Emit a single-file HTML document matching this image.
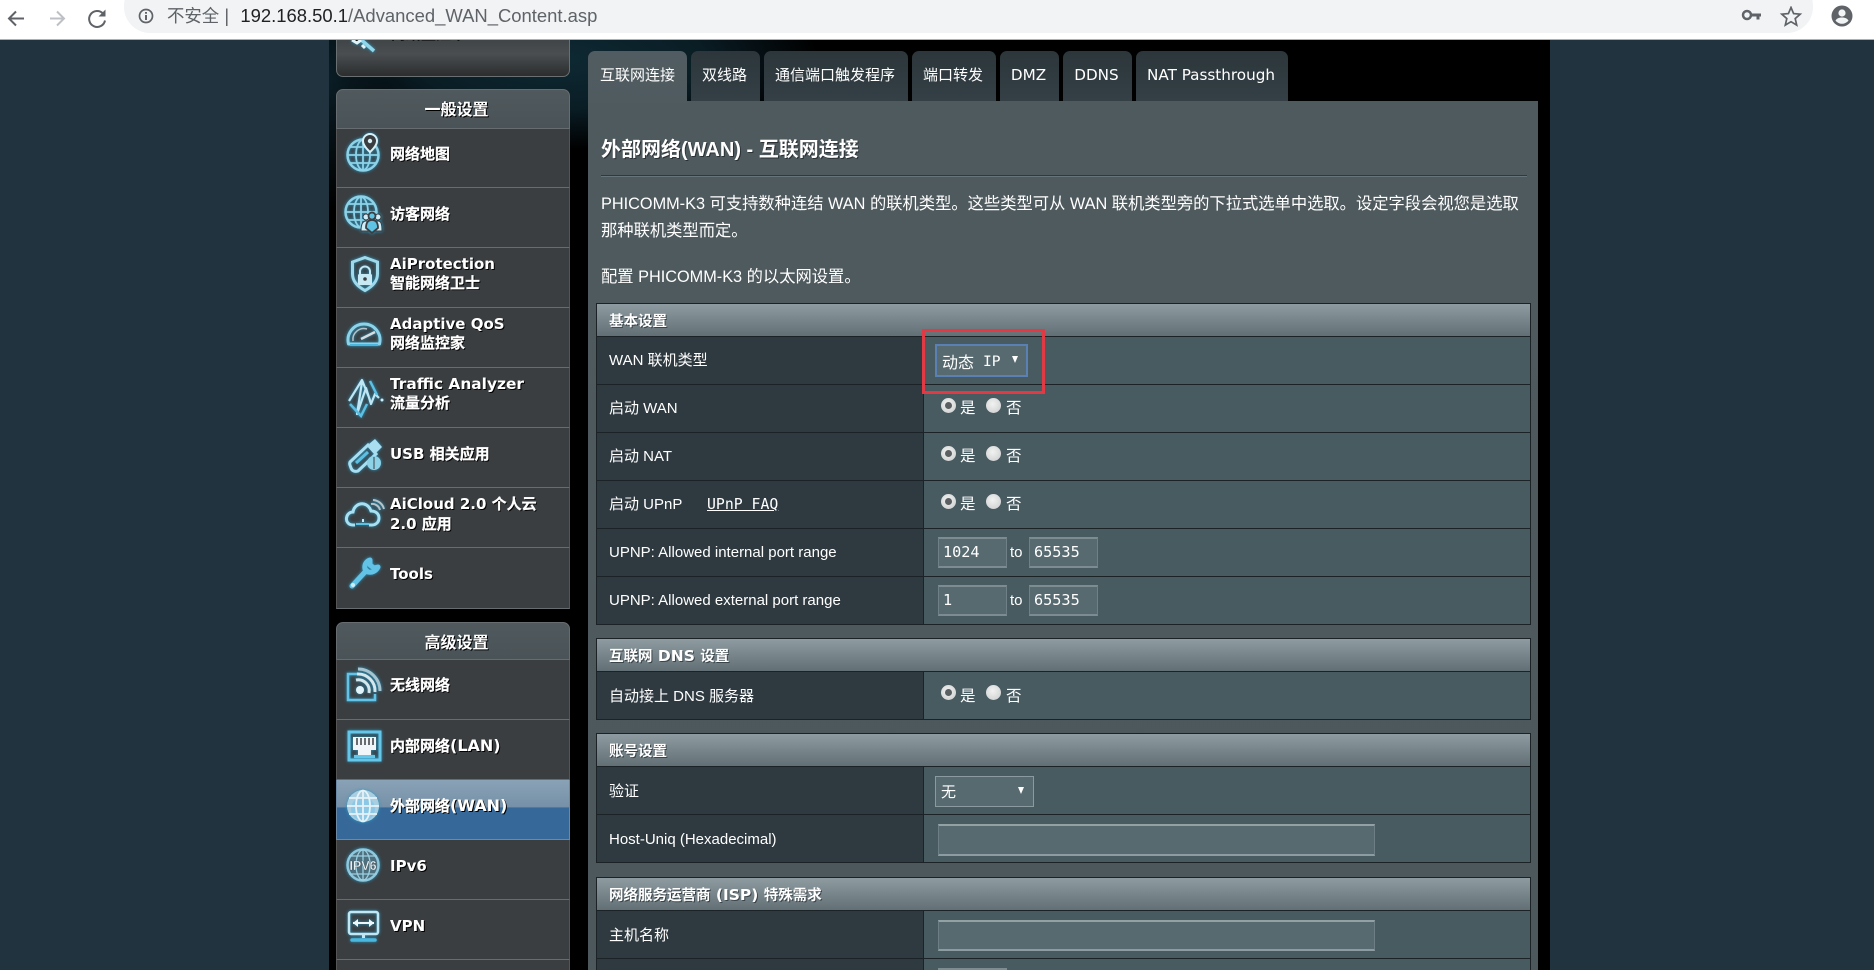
<!DOCTYPE html>
<html lang="zh"><head><meta charset="utf-8"><title>Advanced_WAN_Content</title>
<style>
html,body{margin:0;padding:0;width:1874px;height:970px;overflow:hidden;background:#21333e}
*{box-sizing:border-box}
body{font-family:"Liberation Sans","Noto Sans CJK SC",sans-serif;color:#fff;position:relative}
.a{position:absolute}
#wrap{left:329px;top:39px;width:1221px;height:931px;background:#000;overflow:hidden}
#banner{left:0;top:0;width:1221px;height:183px;background:
 radial-gradient(ellipse 260px 90px at 230px 20px,#0e2933 0%,#0a1d25 55%,rgba(0,0,0,0) 100%),
 radial-gradient(ellipse 60px 130px at 0 40px,#0b1d25 0%,rgba(0,0,0,0) 100%)}
#bar{left:0;top:0;width:1874px;height:40px;background:#fff;border-bottom:1px solid #aeb1b3;z-index:9}
#pill{left:124px;top:-20px;width:1689px;height:53px;background:#f1f3f4;border-radius:26px}
#url{left:167px;top:3px;height:26px;line-height:26px;font-size:18.450px;color:#5f6368;white-space:nowrap}
#url b{font-weight:400;color:#202124}
#url i{font-style:normal;font-size:17.400px}
.it{position:absolute;left:336px;width:234px;height:60px;border-bottom:1px solid #666c6f;border-left:1px solid #555;border-right:1px solid #555;background:#3a3e41;z-index:1}
.t{position:absolute;left:390px;font:bold 15px/20px "DejaVu Sans","Noto Sans CJK SC",sans-serif;color:#fff;text-shadow:1px 1px 0 #000;white-space:nowrap;z-index:3}
.t i{font-style:normal;font-size:15px;font-family:"Noto Sans CJK SC",sans-serif;-webkit-text-stroke:.25px #fff}
.t u{text-decoration:none;font-size:16px}
svg.ic{position:absolute;z-index:3;overflow:visible;filter:drop-shadow(0 0 1.500px #2a9cc8)}
.tab{position:absolute;top:51px;height:50px;background:linear-gradient(#2c363b,#344046);border-radius:7px 7px 0 0;font:15.200px/48px "DejaVu Sans","Noto Sans CJK SC",sans-serif;color:#fff;text-align:center;white-space:nowrap;padding-right:2px}
.tab i{font-style:normal;font-size:15px;font-family:"Noto Sans CJK SC",sans-serif}
.tab.on{background:linear-gradient(#505c61,#4f5b5f);height:52px;padding-right:0}
#panel{left:588px;top:101px;width:950px;height:869px;background:linear-gradient(#4f5a5e,#4c585c)}
.p{position:absolute;left:601px;font-size:16.300px;line-height:24px;white-space:nowrap;color:#fff}
.th{position:absolute;left:596px;width:935px;height:34px;background:linear-gradient(#8e9ca1,#626f75);border:1px solid #1c2326;font:bold 15.500px/33px "DejaVu Sans","Noto Sans CJK SC",sans-serif;padding-left:12px;color:#fff;text-shadow:1px 1px 0 #3a454a}
.th i{font-style:normal;font-size:14.500px;font-family:"Noto Sans CJK SC",sans-serif}
.row{position:absolute;left:596px;width:935px;height:48.300px;background:#485b61;border:1px solid #1c2326;border-top:0}
.row:before{content:"";position:absolute;left:0;top:0;bottom:0;width:326px;background:#2e3a40;border-right:1px solid #1c2326}
.l{position:absolute;left:609px;font-size:15px;line-height:20px;white-space:nowrap;color:#fff;z-index:2}
.r{position:absolute;width:15px;height:15px;border-radius:50%;background:radial-gradient(circle at 45% 40%,#f2f2f2,#c9cbcb);z-index:2}
.r.on:after{content:"";position:absolute;left:4px;top:4px;width:7px;height:7px;border-radius:50%;background:#5a5f61}
.v{position:absolute;font-size:15.500px;line-height:20px;z-index:2;color:#fff}
.in{position:absolute;background:#576a70;border:1px solid #6d7f85;border-top:2px solid #93a1a5;border-bottom:2px solid #8d9ca0;z-index:2;font:15.200px/26px "DejaVu Sans Mono",monospace;color:#fff;padding-left:4px}
.in.s{border-color:#6f8086;border-top-color:#7d8c91;border-bottom-color:#7d8c91}
.sel{position:absolute;background:#576a70;z-index:2;color:#fff;font:14.600px/30px "DejaVu Sans Mono","Noto Sans CJK SC",monospace;white-space:pre}
.sel s{position:absolute;text-decoration:none;width:0;height:0;border-left:3.500px solid transparent;border-right:3.500px solid transparent;border-top:7px solid #fff}
.sel span{position:absolute}
</style></head><body>

<div class="a" id="wrap"><div class="a" id="banner"></div></div>

<div class="a" id="bar">
<div class="a" id="pill"></div>
<svg class="a" style="left:0;top:0" width="120" height="39" fill="none">
<path d="M24 18.500H10M16 11.500l-7 7 7 7" stroke="#5f6368" stroke-width="2"/>
<path d="M64 18.500H50M57 11.500l7 7-7 7" stroke="#bdc1c6" stroke-width="2"/>
<path d="M103 13.500a8 8 0 1 0 2 7" stroke="#5f6368" stroke-width="2"/><path d="M105.500 9.500v7h-7z" fill="#5f6368"/>
</svg>
<svg class="a" style="left:138px;top:8px" width="18" height="18" fill="none"><circle cx="8" cy="8" r="6.500" stroke="#5f6368" stroke-width="1.700"/><path d="M8 7v5M8 4v1.700" stroke="#5f6368" stroke-width="2"/></svg>
<div class="a" id="url"><i>不安全</i> <span style="color:#5f6368;margin:0 1px 0 0">|</span>&nbsp;&nbsp;<b>192.168.50.1</b>/Advanced_WAN_Content.asp</div>
<svg class="a" style="left:1740px;top:6px" width="110" height="24"><circle cx="7" cy="9" r="4" fill="none" stroke="#5f6368" stroke-width="2.500"/><path d="M10 7.500h11v3h-1.500v3h-3v-3H10z" fill="#5f6368"/>
<path d="M51 1.500l2.600 6.100 6.600.6-5 4.400 1.500 6.500-5.700-3.400-5.700 3.400 1.500-6.500-5-4.400 6.600-.6z" fill="none" stroke="#5f6368" stroke-width="1.700"/></svg>
<svg class="a" style="left:1830px;top:5px" width="24" height="24"><circle cx="12" cy="11" r="10.500" fill="#5f6368"/><circle cx="12" cy="8" r="3.600" fill="#f1f3f4"/><path d="M5.500 15.500c1.500-2.300 4-3 6.500-3s5 .7 6.500 3c-1.500 2-4 3.300-6.500 3.300s-5-1.300-6.500-3.300z" fill="#f1f3f4"/></svg>
</div>

<!-- SIDEBAR -->
<div class="a" style="left:336px;top:20px;width:234px;height:57px;border:1px solid #6a6f72;border-radius:7px;background:linear-gradient(#3e4346 30%,#4a4e50 60%,#2b2d2e);z-index:1"></div>
<svg class="ic" style="left:350px;top:34px" width="34" height="20"><path d="M8 3l16 14" stroke="#8fd6ea" stroke-width="3.500"/><path d="M2 6l5 3 4-3M12 11l3 3" stroke="#dff3f8" stroke-width="3"/></svg>
<div class="t" style="top:23px;z-index:3"><i>网络监控中</i></div>

<div class="a" style="left:336px;top:89px;width:234px;height:40px;border:1px solid #666c6f;border-radius:7px 7px 0 0;background:linear-gradient(#50595d,#4a5357);text-align:center;font:bold 16px/37px 'Noto Sans CJK SC',sans-serif;text-shadow:1px 1px 0 #000;padding-left:7px;z-index:2">一般设置</div>
<div class="it" style="top:128px"></div><div class="it" style="top:187.500px"></div><div class="it" style="top:247.500px"></div><div class="it" style="top:307.500px"></div><div class="it" style="top:367.500px"></div><div class="it" style="top:427.500px"></div><div class="it" style="top:487.500px"></div><div class="it" style="top:547.500px;height:61px"></div>

<div class="a" style="left:336px;top:622px;width:234px;height:38px;border:1px solid #666c6f;border-radius:7px 7px 0 0;background:linear-gradient(#50595d,#4a5357);text-align:center;font:bold 16px/37px 'Noto Sans CJK SC',sans-serif;text-shadow:1px 1px 0 #000;padding-left:7px;z-index:2">高级设置</div>
<div class="it" style="top:659.500px"></div><div class="it" style="top:719.500px"></div>
<div class="it" style="top:779.500px;height:60.500px;background:linear-gradient(#8aa2b6 0,#7590a8 46%,#36699a 47%,#36699a 100%);border-color:#6a8aa5"></div>
<div class="it" style="top:839.500px"></div><div class="it" style="top:899.500px"></div><div class="it" style="top:959.500px;height:10.500px;border-bottom:0"></div>

<div class="t" style="top:144px"><i>网络地图</i></div>
<div class="t" style="top:204px"><i>访客网络</i></div>
<div class="t" style="top:254px">AiProtection</div><div class="t" style="top:273px"><i>智能网络卫士</i></div>
<div class="t" style="top:314px">Adaptive QoS</div><div class="t" style="top:333px"><i>网络监控家</i></div>
<div class="t" style="top:374px"><span style="font-size:15.400px">Traffic Analyzer</span></div><div class="t" style="top:393px"><i>流量分析</i></div>
<div class="t" style="top:444px">USB <i>相关应用</i></div>
<div class="t" style="top:494px">AiCloud 2.0 <i>个人云</i></div><div class="t" style="top:514px">2.0 <i>应用</i></div>
<div class="t" style="top:564px">Tools</div>
<div class="t" style="top:675px"><i>无线网络</i></div>
<div class="t" style="top:736px"><i>内部网络</i><u>(LAN)</u></div>
<div class="t" style="top:796px"><i>外部网络</i><u>(WAN)</u></div>
<div class="t" style="top:856px">IPv6</div>
<div class="t" style="top:916px">VPN</div>

<!-- icons -->
<svg class="ic" style="left:346px;top:133px" width="36" height="40" fill="none" stroke="#8ed2e8" stroke-width="1.800">
<circle cx="17" cy="22" r="15.500" stroke-width="2.500"/><ellipse cx="17" cy="22" rx="7" ry="15"/><path d="M2 22h30M4 14h26M4 30h26M17 7v30"/>
<path d="M24 1a7 7 0 0 1 7 7c0 5-7 11-7 11s-7-6-7-11a7 7 0 0 1 7-7z" fill="#3a3e41" stroke="#d9f0f6" stroke-width="2"/><circle cx="24" cy="8" r="2.200" fill="#d9f0f6" stroke="none"/></svg>
<svg class="ic" style="left:345px;top:195px" width="38" height="36" fill="none" stroke="#8ed2e8" stroke-width="1.800">
<circle cx="16" cy="17" r="15.500" stroke-width="2.500"/><ellipse cx="16" cy="17" rx="7" ry="15"/><path d="M1 17h30M3 9h26M3 25h26M16 2v30"/>
<g fill="#cfeef8" stroke="#3a3e41" stroke-width="1"><circle cx="21" cy="22" r="3"/><circle cx="33" cy="22" r="3"/><path d="M16 36c0-7 2-10 5-10s5 3 5 10zM28 36c0-7 2-10 5-10s4 3 4 10z"/></g>
<g fill="#5fc3e4" stroke="#3a3e41"><circle cx="27" cy="21" r="3.500"/><path d="M21 33c0-5 2-8 6-8s6 3 6 8l-6 5z"/></g></svg>
<svg class="ic" style="left:350px;top:256px" width="30" height="36" fill="none"><path d="M15 1.500l12.500 4.500v12c0 8-6 13-12.500 16.500C8.500 31 2.500 26 2.500 18V6z" stroke="#9fd9ea" stroke-width="3"/><path d="M10 19v-3.500a5 5 0 0 1 10 0V19" stroke="#c7e9f3" stroke-width="2"/><rect x="8" y="18" width="14" height="11" rx="1.500" fill="#c7e9f3"/><circle cx="15" cy="23" r="1.800" fill="#3a3e41"/></svg>
<svg class="ic" style="left:346px;top:318px" width="36" height="30" fill="none"><path d="M2.500 26a16 16 0 1 1 31 0z" stroke="#8ed2e8" stroke-width="3" stroke-linejoin="round"/><path d="M7 23a11 11 0 0 1 14-12" stroke="#b6c3c9" stroke-width="1.500"/><path d="M15 21l14-7" stroke="#d6dde0" stroke-width="2.500"/><path d="M4 27h28" stroke="#4ab8de" stroke-width="2"/></svg>
<svg class="ic" style="left:347px;top:378px" width="38" height="42" fill="none"><path d="M2 23L15 2l8 20M15 4l-5 32 9-26 5 16 4-10 4 4" stroke="#bfe6f2" stroke-width="2.200" stroke-linejoin="round"/><path d="M3 26l11 12 6-12M23 3l7 14" stroke="#5cc0e2" stroke-width="2.500"/><circle cx="35" cy="22" r="1.500" fill="#cfeef8"/></svg>
<svg class="ic" style="left:347px;top:437px" width="38" height="36" fill="none"><path d="M3 25L21 8l8 9-18 17c-3 1-6 0-7-3s-2-4-1-6z" stroke="#a9def0" stroke-width="3"/><path d="M22 7l6-5 7 8-6 6z" fill="#a9def0"/><path d="M9 26l12-11" stroke="#5cc0e2" stroke-width="3"/><circle cx="27" cy="26" r="7" fill="#8ed2e8"/><path d="M27 20v12" stroke="#3a3e41"/></svg>
<svg class="ic" style="left:345px;top:499px" width="40" height="30" fill="none"><path d="M10 26H8C3 26 1 22 1.500 19 2 15 5 13 8 13c1-6 6-9 11-8 4 1 6 4 7 7 5 0 8 3 8 7s-3 7-7 7h-3" stroke="#a9e0f1" stroke-width="3"/><path d="M11 25h13" stroke="#5cc0e2" stroke-width="2"/><path d="M18 23v-3" stroke="#c7e9f3" stroke-width="2"/><path d="M26 5a8 8 0 0 1 9 6M28 1a12 12 0 0 1 11 9" stroke="#b6c3c9" stroke-width="2"/></svg>
<svg class="ic" style="left:348px;top:557px" width="34" height="34" fill="none"><path d="M4 29l13-14M22 3c-3 1-6 4-5 9l3 3c4 1 8-1 10-5l-4 1-4-3z" stroke="#62c3e6" stroke-width="5" stroke-linejoin="round" stroke-linecap="round"/><circle cx="5" cy="28" r="2" fill="#cfeef8"/></svg>
<svg class="ic" style="left:346px;top:668px" width="36" height="34" fill="none"><path d="M12 6H2v26h27V26" stroke="#62c3e6" stroke-width="2.500"/><circle cx="14" cy="22" r="4" fill="#dff3f8"/><path d="M10 12a11 11 0 0 1 13 13M11 6a17 17 0 0 1 18 18" stroke="#d3e7ed" stroke-width="3"/><path d="M12 1a22 22 0 0 1 22 22" stroke="#a5c4cf" stroke-width="3"/></svg>
<svg class="ic" style="left:348px;top:731px" width="33" height="31"><rect x="1" y="1" width="31" height="28" fill="none" stroke="#66c6e8" stroke-width="3"/><path d="M5 6h23v13h-5v5H10v-5H5z" fill="#f0f6f8"/><path d="M9 7v7M13 7v7M17 7v7M21 7v7M25 7v7" stroke="#3a3e41" stroke-width="1.500"/><path d="M6 24h21v3H6z" fill="#66c6e8"/></svg>
<svg class="ic" style="left:346px;top:789px" width="34" height="34" fill="none"><circle cx="17" cy="17" r="16" fill="#a8cee0"/><circle cx="17" cy="20" r="12" fill="#79c4ea" opacity=".6"/><g stroke="#e5f2f7" stroke-width="1.800"><ellipse cx="17" cy="17" rx="7" ry="15.500"/><path d="M1 17h32M3 9h28M3 25h28M17 1v32"/></g></svg>
<svg class="ic" style="left:346px;top:848px" width="34" height="34" fill="none"><circle cx="17" cy="17" r="15.500" stroke="#8fc8dc" stroke-width="2.500" fill="#4d6f7e"/><g stroke="#9bd0e1" stroke-width="1.300"><ellipse cx="17" cy="17" rx="7" ry="15"/><path d="M3 8h28M3 26h28M17 2v30"/></g><text x="17" y="22" text-anchor="middle" font-family="Liberation Sans" font-weight="700" font-size="12.500" fill="#e6f3f7" stroke="#3a3e41" stroke-width=".3">IPV6</text></svg>
<svg class="ic" style="left:347px;top:910px" width="34" height="34" fill="none"><rect x="2" y="2" width="29" height="22" rx="2" stroke="#c3e7f2" stroke-width="2.500"/><path d="M6 13h21" stroke="#eef7fa" stroke-width="2"/><path d="M11 9l-5 4 5 4zM22 9l5 4-5 4z" fill="#eef7fa"/><path d="M16.500 24v4" stroke="#c3e7f2" stroke-width="3"/><path d="M5 30h23" stroke="#4ab8de" stroke-width="3.500" stroke-linecap="round"/></svg>

<!-- TABS -->
<div class="tab on" style="left:588px;width:99px;z-index:2"><i>互联网连接</i></div>
<div class="tab" style="left:691px;width:69px"><i>双线路</i></div>
<div class="tab" style="left:764px;width:144px"><i>通信端口触发程序</i></div>
<div class="tab" style="left:912px;width:84px"><i>端口转发</i></div>
<div class="tab" style="left:1000px;width:59px">DMZ</div>
<div class="tab" style="left:1063px;width:69px">DDNS</div>
<div class="tab" style="left:1136px;width:152px">NAT Passthrough</div>

<div class="a" id="panel"></div>
<div class="a" style="left:601px;top:136px;font:bold 20px/28px 'Liberation Sans','Noto Sans CJK SC',sans-serif;text-shadow:1px 1px 0 #2a3236;white-space:nowrap">外部网络(WAN) - 互联网连接</div>
<div class="a" style="left:601px;top:175px;width:926px;height:1px;background:#2e3a3e;box-shadow:0 1px 0 #66757a"></div>
<div class="p" style="top:192px">PHICOMM-K3 可支持数种连结 WAN 的联机类型。这些类型可从 WAN 联机类型旁的下拉式选单中选取。设定字段会视您是选取</div>
<div class="p" style="top:219px">那种联机类型而定。</div>
<div class="p" style="top:265px">配置 PHICOMM-K3 的以太网设置。</div>

<!-- table 1 -->
<div class="th" style="top:303px"><i>基本设置</i></div>
<div class="row" style="top:336.500px"></div><div class="row" style="top:384.500px"></div><div class="row" style="top:432.500px"></div><div class="row" style="top:480.500px"></div><div class="row" style="top:528.500px"></div><div class="row" style="top:576.500px"></div>
<div class="l" style="top:351px">WAN 联机类型</div>
<div class="l" style="top:399px">启动 WAN</div>
<div class="l" style="top:447px">启动 NAT</div>
<div class="l" style="top:495px">启动 UPnP</div>
<div class="l" style="left:707px;top:495px;font:14.800px/20px 'DejaVu Sans Mono',monospace;text-decoration:underline">UPnP FAQ</div>
<div class="l" style="top:543px">UPNP: Allowed internal port range</div>
<div class="l" style="top:591px">UPNP: Allowed external port range</div>

<div class="sel" style="left:935px;top:344px;width:93px;height:33px;border:2px solid #5a80b4"><span style="left:5px;top:0;font:16px/30px 'Noto Sans CJK SC',sans-serif">动态</span><span style="left:46px;top:0;font:14.600px/32px 'DejaVu Sans Mono',monospace">IP</span><s style="left:75px;top:10px"></s></div>
<div class="a" style="left:922px;top:329px;width:123px;height:65px;border:3.500px solid #e23a45;z-index:5"></div>

<div class="r on" style="left:941px;top:398px"></div><div class="v" style="left:960px;top:399px">是</div><div class="r" style="left:986px;top:398px"></div><div class="v" style="left:1006px;top:399px">否</div>
<div class="r on" style="left:941px;top:446px"></div><div class="v" style="left:960px;top:447px">是</div><div class="r" style="left:986px;top:446px"></div><div class="v" style="left:1006px;top:447px">否</div>
<div class="r on" style="left:941px;top:494px"></div><div class="v" style="left:960px;top:495px">是</div><div class="r" style="left:986px;top:494px"></div><div class="v" style="left:1006px;top:495px">否</div>

<div class="in s" style="left:938px;top:537px;width:69px;height:31px">1024</div><div class="v" style="left:1010px;top:543px;font-size:15px">to</div><div class="in s" style="left:1029px;top:537px;width:69px;height:31px">65535</div>
<div class="in s" style="left:938px;top:585px;width:69px;height:31px">1</div><div class="v" style="left:1010px;top:591px;font-size:15px">to</div><div class="in s" style="left:1029px;top:585px;width:69px;height:31px">65535</div>

<!-- table 2 -->
<div class="th" style="top:638px"><i>互联网</i> DNS <i>设置</i></div>
<div class="row" style="top:672px"></div>
<div class="l" style="top:687px">自动接上 DNS 服务器</div>
<div class="r on" style="left:941px;top:685px"></div><div class="v" style="left:960px;top:687px">是</div><div class="r" style="left:986px;top:685px"></div><div class="v" style="left:1006px;top:687px">否</div>

<!-- table 3 -->
<div class="th" style="top:733px"><i>账号设置</i></div>
<div class="row" style="top:767px"></div><div class="row" style="top:815px"></div>
<div class="l" style="top:782px">验证</div>
<div class="l" style="top:830px">Host-Uniq (Hexadecimal)</div>
<div class="sel" style="left:935px;top:776px;width:99px;height:31px;border:1px solid #8b9a9f;padding-left:5px;font-family:'Noto Sans CJK SC',sans-serif;font-size:15px">无<s style="left:82px;top:10px"></s></div>
<div class="in" style="left:938px;top:824px;width:437px;height:32px"></div>

<!-- table 4 -->
<div class="th" style="top:877px"><i>网络服务运营商</i> (ISP) <i>特殊需求</i></div>
<div class="row" style="top:911px"></div><div class="row" style="top:959px;height:11px;border-bottom:0"></div>
<div class="l" style="top:926px">主机名称</div>
<div class="in" style="left:938px;top:920px;width:437px;height:31px"></div>
<div class="a" style="left:938px;top:968px;width:69px;height:2px;background:#7d8c91;z-index:2"></div>
</body></html>
